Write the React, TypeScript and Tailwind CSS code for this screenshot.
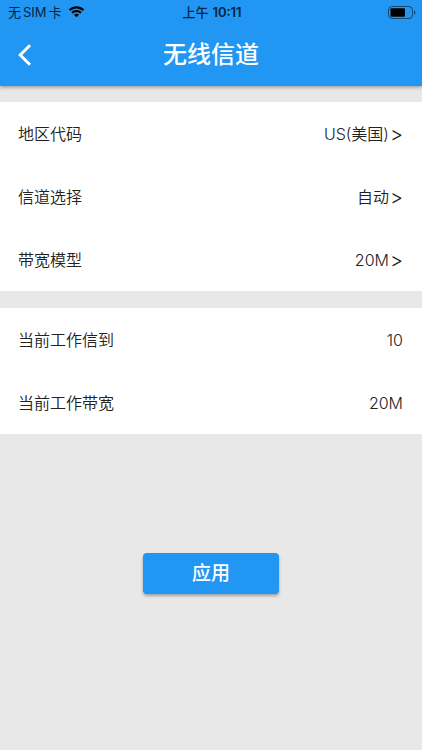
import { useState } from "react";

type Row = { label: string; value: string };

const settings: Row[] = [
  { label: "地区代码", value: "US(美国)" },
  { label: "信道选择", value: "自动" },
  { label: "带宽模型", value: "20M" },
];

const current: Row[] = [
  { label: "当前工作信到", value: "10" },
  { label: "当前工作带宽", value: "20M" },
];

function WifiIcon() {
  return (
    <svg viewBox="0 0 17 12" className="h-3 w-[17px]" fill="currentColor" aria-hidden="true">
      <path d="M8.5 2.4c2.3 0 4.4.9 6 2.4.1.1.3.1.4 0l1.2-1.200c.1-.1.1-.3 0-.4C12-.8 5-.8.9 3.200c-.1.1-.1.3 0 .4l1.200 1.200c.1.1.3.1.4 0 1.600-1.500 3.700-2.400 6-2.400z" />
      <path d="M8.500 6.300c1.250 0 2.450.450 3.350 1.300.150.100.300.100.400 0l1.200-1.200c.100-.100.100-.300 0-.400-2.800-2.600-7.100-2.600-9.900 0-.100.100-.100.300 0 .400l1.200 1.200c.100.100.300.100.400 0 .900-.850 2.100-1.300 3.350-1.300z" />
      <path d="M10.800 9c.100-.100.100-.300 0-.400-1.300-1.100-3.300-1.100-4.600 0-.100.100-.100.300 0 .400l2.100 2.100c.100.100.300.100.400 0z" />
    </svg>
  );
}

function BatteryIcon() {
  return (
    <svg viewBox="0 0 28 13" className="h-[13px] w-7" fill="none" aria-hidden="true">
      <rect x="0.500" y="0.500" width="24" height="12" rx="3.500" stroke="#000" strokeOpacity="0.500" />
      <rect x="2.500" y="2.200" width="14.500" height="8.600" rx="1" fill="#000" />
      <path d="M26 4.500v4c.9-.3 1.500-1.100 1.500-2s-.6-1.700-1.500-2z" fill="#000" fillOpacity="0.500" />
    </svg>
  );
}

function StatusBar() {
  return (
    <div className="grid h-6 grid-cols-3 items-center pr-1.5 pl-2 text-[13px] leading-6 text-[#06263f]">
      <div className="flex items-center gap-1.5">
        <span className="flex gap-0.5">
          <span>无</span>
          <span>SIM</span>
          <span>卡</span>
        </span>
        <span className="text-black">
          <WifiIcon />
        </span>
      </div>
      <div className="flex justify-center gap-1">
        <span className="font-medium">上午</span>
        <span className="font-semibold">10:11</span>
      </div>
      <div className="flex justify-end">
        <BatteryIcon />
      </div>
    </div>
  );
}

export default function App() {
  const [applied, setApplied] = useState(false);

  return (
    <div className="min-h-screen bg-[#e8e8e8] font-['Inter','Noto_Sans_CJK_SC',sans-serif] text-base text-[#222]">
      <header className="bg-[#2196f3] shadow-[0_1px_4px_rgba(0,0,0,0.4)]">
        <StatusBar />
        <div className="grid h-[62px] grid-cols-[48px_1fr_48px] items-center text-white">
          <button type="button" aria-label="返回" className="flex h-12 items-center pl-[18px]">
            <svg viewBox="0 0 14 22" className="h-[22px] w-3.5" fill="none" stroke="currentColor" strokeWidth="3" aria-hidden="true">
              <path d="M12 1.200L2.200 11l9.800 9.800" />
            </svg>
          </button>
          <h1 className="text-center text-2xl font-medium">无线信道</h1>
        </div>
      </header>

      <main>
        <section className="mt-4 bg-white">
          {settings.map((row) => (
            <button
              key={row.label}
              type="button"
              className="flex h-[63px] w-full items-center justify-between pr-[19px] pl-[18px] font-[350]"
            >
              <span>{row.label}</span>
              <span className="flex items-center gap-px">
                {row.value}
                <span className="text-xl leading-6 font-light">&gt;</span>
              </span>
            </button>
          ))}
        </section>

        <dl className="mt-[17px] bg-white font-[350]">
          {current.map((row) => (
            <div key={row.label} className="flex h-[63px] items-center justify-between pr-[19px] pl-[18px]">
              <dt>{row.label}</dt>
              <dd>{row.value}</dd>
            </div>
          ))}
        </dl>

        <div className="mt-[119px] flex justify-center">
          <button
            type="button"
            onClick={() => setApplied(true)}
            disabled={applied}
            className="h-[41px] w-[136px] rounded bg-[#2196f3] text-[19px] leading-7 font-medium text-white shadow-[0_2px_3px_rgba(0,0,0,0.3)]"
          >
            应用
          </button>
        </div>
      </main>
    </div>
  );
}
